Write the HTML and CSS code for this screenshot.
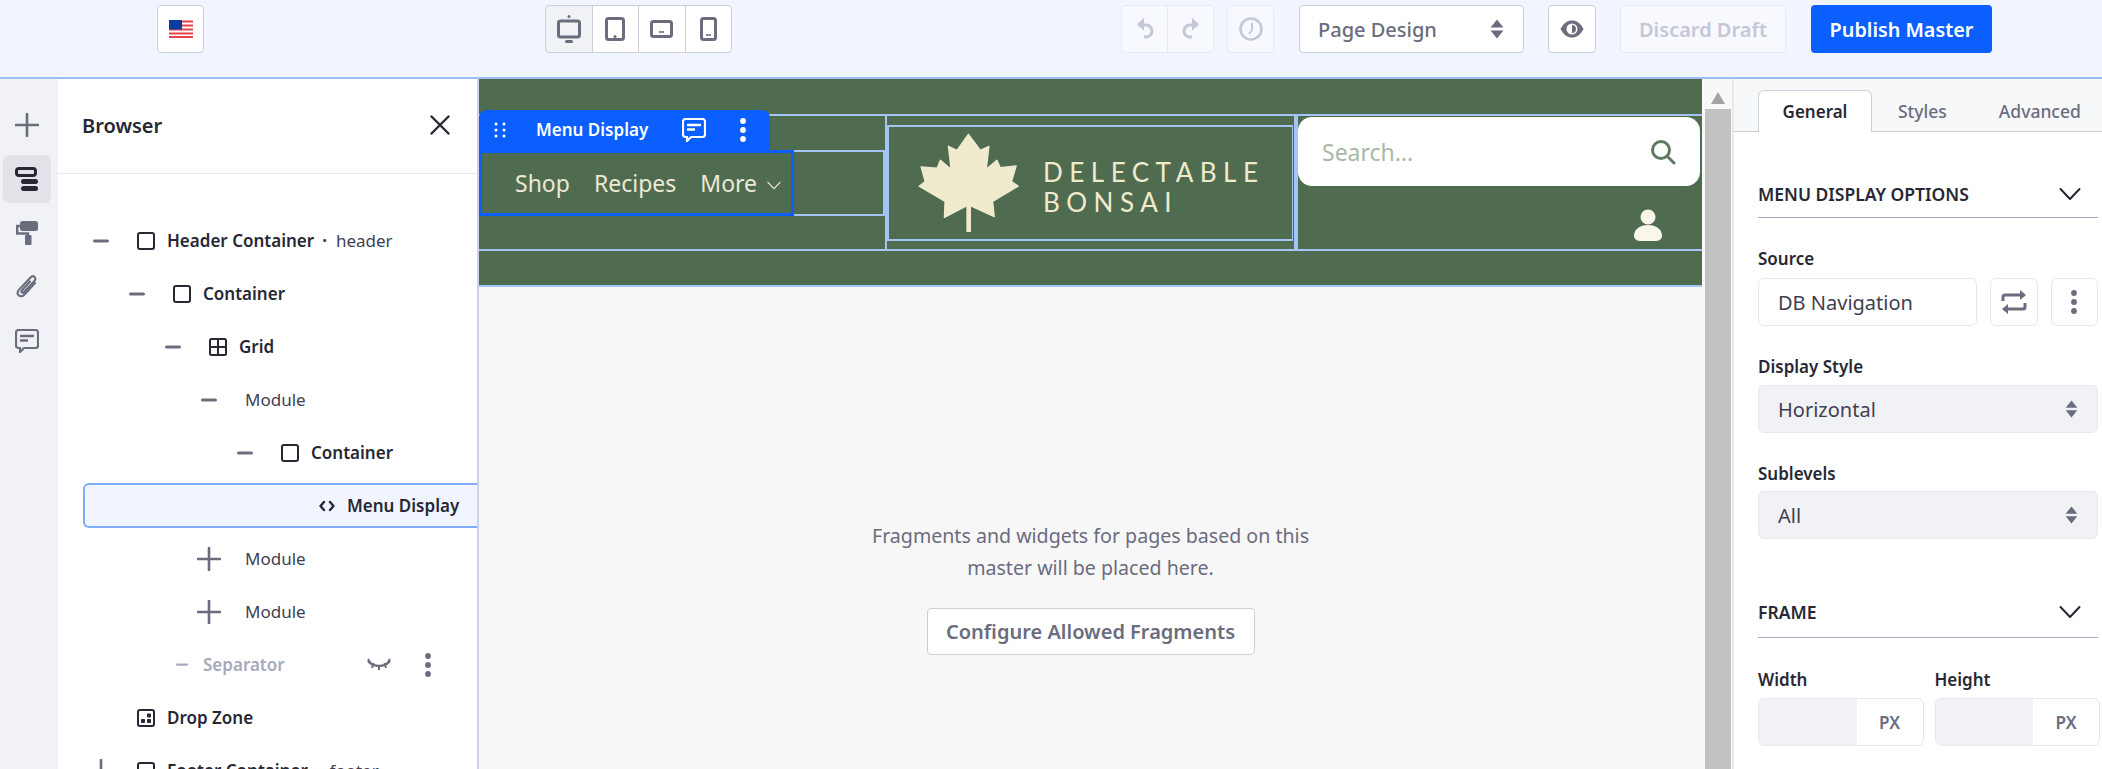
FILE: index.html
```html
<!DOCTYPE html>
<html lang="en">
<head>
  <meta charset="UTF-8" />
  <title>Page Design</title>
  <link rel="stylesheet" href="styles.css">
</head>
<body>

  <svg class="sprite" xmlns="http://www.w3.org/2000/svg">
    <symbol id="i-plus" viewBox="0 0 24 24"><path d="M12 1v22M1 12h22" fill="none" stroke="currentColor" stroke-width="2.6" stroke-linecap="round"/></symbol>
    <symbol id="i-minus" viewBox="0 0 16 4"><path d="M1.500 2h13" fill="none" stroke="currentColor" stroke-width="3" stroke-linecap="round"/></symbol>
    <symbol id="i-box" viewBox="0 0 18 18"><rect x="1" y="1" width="16" height="16" rx="2" fill="none" stroke="currentColor" stroke-width="2"/></symbol>
    <symbol id="i-grid" viewBox="0 0 18 18"><rect x="1" y="1" width="16" height="16" rx="1.5" fill="none" stroke="currentColor" stroke-width="2"/><path d="M9 1v16M1 9h16" stroke="currentColor" stroke-width="2"/></symbol>
    <symbol id="i-code" viewBox="0 0 16 12"><path d="M5 2 1.500 6 5 10M11 2l3.500 4L11 10" fill="none" stroke="currentColor" stroke-width="2.400" stroke-linecap="round" stroke-linejoin="round"/></symbol>
    <symbol id="i-zone" viewBox="0 0 18 18"><rect x="1" y="1" width="16" height="16" rx="2" fill="none" stroke="currentColor" stroke-width="2"/><rect x="4" y="10" width="4" height="4" rx=".8" fill="currentColor"/><rect x="10" y="10" width="4" height="4" rx=".8" fill="currentColor"/><rect x="10" y="4.500" width="4" height="4" rx=".8" fill="currentColor"/></symbol>
    <symbol id="i-dots" viewBox="0 0 6 24"><circle cx="3" cy="3" r="2.900" fill="currentColor"/><circle cx="3" cy="12" r="2.900" fill="currentColor"/><circle cx="3" cy="21" r="2.900" fill="currentColor"/></symbol>
    <symbol id="i-comment" viewBox="0 0 24 24"><path d="M3.500 1h17A2.500 2.500 0 0 1 23 3.500v13a2.500 2.500 0 0 1-2.500 2.500H9l-4 4v-4H3.500A2.500 2.500 0 0 1 1 16.500v-13A2.500 2.500 0 0 1 3.500 1Z" fill="none" stroke="currentColor" stroke-width="2.200"/><path d="M5 7h14M5 11.500h8" stroke="currentColor" stroke-width="2.400"/></symbol>
    <symbol id="i-updown" viewBox="0 0 14 20"><path d="M7 .5 13.500 8.500H.5ZM7 19.500.5 11.500h13Z" fill="currentColor"/></symbol>
    <symbol id="i-chevron" viewBox="0 0 22 14"><path d="M1.500 2 11 12l9.500-10" fill="none" stroke="currentColor" stroke-width="2" stroke-linecap="round" stroke-linejoin="round"/></symbol>
  </svg>

  <header class="topbar">
    <button class="tool tool-flag" aria-label="Language">
      <svg width="24" height="18" viewBox="0 0 24 18">
        <rect width="24" height="18" fill="#fff"/>
        <path d="M0 1.500h24M0 5.500h24M0 9.500h24M0 13.500h24M0 17h24" stroke="#e8434b" stroke-width="1.800"/>
        <rect width="13" height="9.500" fill="#0b3c9e"/>
      </svg>
    </button>

    <div class="group group-devices">
      <button class="tool tool-active" aria-label="Desktop">
        <svg width="24" height="28" viewBox="0 0 24 28" class="dev"><circle cx="12" cy="1.500" r="1.500" fill="currentColor"/><rect x="1.500" y="6" width="21" height="16" rx="2" fill="none" stroke="currentColor" stroke-width="3"/><rect x="8" y="25" width="8" height="3" rx="1.500" fill="currentColor"/></svg>
      </button>
      <button class="tool" aria-label="Tablet portrait">
        <svg width="20" height="24" viewBox="0 0 20 24" class="dev"><rect x="1.500" y="1.500" width="17" height="21" rx="2" fill="none" stroke="currentColor" stroke-width="3"/><circle cx="10" cy="19.500" r="1.500" fill="currentColor"/></svg>
      </button>
      <button class="tool" aria-label="Tablet landscape">
        <svg width="23" height="18" viewBox="0 0 23 18" class="dev"><rect x="1.500" y="1.500" width="20" height="15" rx="2" fill="none" stroke="currentColor" stroke-width="3"/><path d="M9 12h5" stroke="currentColor" stroke-width="1.600"/></svg>
      </button>
      <button class="tool" aria-label="Phone">
        <svg width="17" height="24" viewBox="0 0 17 24" class="dev"><rect x="1.500" y="1.500" width="14" height="21" rx="2" fill="none" stroke="currentColor" stroke-width="3"/><path d="M6 18h5" stroke="currentColor" stroke-width="1.600"/></svg>
      </button>
    </div>

    <div class="group group-undo">
      <button class="tool tool-off" aria-label="Undo">
        <svg width="18" height="24" viewBox="0 0 18 24"><path d="M2 7h8a6 6 0 0 1 0 12H8" fill="none" stroke="currentColor" stroke-width="3" transform="translate(0 1)"/><path d="M8 1v13L1 8Z" fill="currentColor" transform="translate(0 -.5)"/></svg>
      </button>
      <button class="tool tool-off" aria-label="Redo">
        <svg width="18" height="24" viewBox="0 0 18 24"><path d="M16 7H8a6 6 0 0 0 0 12h2" fill="none" stroke="currentColor" stroke-width="3" transform="translate(0 1)"/><path d="M10 1v13l7-6Z" fill="currentColor" transform="translate(0 -.5)"/></svg>
      </button>
    </div>

    <button class="tool tool-off tool-single tool-history" aria-label="History">
      <svg width="24" height="24" viewBox="0 0 24 24"><circle cx="12" cy="12" r="10.500" fill="none" stroke="currentColor" stroke-width="2.600"/><path d="M13 6v7l-3 4" fill="none" stroke="currentColor" stroke-width="2"/></svg>
    </button>

    <div class="mode-select">
      <span>Page Design</span>
      <svg width="14" height="20" class="updown-top"><use href="#i-updown"/></svg>
    </div>

    <button class="tool tool-single tool-eye" aria-label="Preview">
      <svg width="24" height="18" viewBox="0 0 24 18"><path d="M.5 9c3-6 7-8.500 11.500-8.500S20.500 3 23.500 9c-3 6-7 8.500-11.500 8.500S3.500 15 .5 9Z" fill="currentColor"/><circle cx="12" cy="9" r="5.500" fill="#fff"/><path d="M12 5a4 4 0 0 1 0 8Z" fill="currentColor"/></svg>
    </button>

    <button class="btn-discard">Discard Draft</button>
    <button class="btn-publish">Publish Master</button>
  </header>

  <main class="workspace">
    <nav class="rail">
      <span class="rail-item"><svg width="24" height="24"><use href="#i-plus"/></svg></span>
      <span class="rail-item rail-active">
        <svg width="24" height="24" viewBox="0 0 24 24"><rect x="1.500" y="1.500" width="19" height="7" rx="2.500" fill="none" stroke="#272833" stroke-width="3"/><rect x="6" y="12" width="17" height="5" rx="2.500" fill="#272833"/><rect x="6" y="19" width="17" height="5" rx="2.500" fill="#272833"/></svg>
      </span>
      <span class="rail-item">
        <svg width="22" height="24" viewBox="0 0 22 24"><rect x="4" y="0" width="18" height="10" rx="2.500" fill="currentColor"/><path d="M4 5H1.200v7.500H12V15" fill="none" stroke="currentColor" stroke-width="2.400"/><rect x="9" y="14" width="6.500" height="10" rx="1" fill="currentColor"/></svg>
      </span>
      <span class="rail-item">
        <svg width="24" height="24" viewBox="0 0 24 24"><path d="M20 8 9.500 19.500c-1.800 2-4.300 2.200-5.800.800s-1.300-3.800.4-5.700L15.500 2.500c1.300-1.400 3-1.500 4.100-.5s1 2.700-.2 4L9 17c-.7.800-1.600.900-2.200.400s-.5-1.400.2-2.200L15 6.500" fill="none" stroke="currentColor" stroke-width="2.100" stroke-linecap="round"/></svg>
      </span>
      <span class="rail-item"><svg width="24" height="24"><use href="#i-comment"/></svg></span>
    </nav>

    <aside class="browser">
      <div class="browser-head">
        <h2>Browser</h2>
        <svg width="20" height="20" viewBox="0 0 20 20"><path d="M1.500 1.500l17 17M18.500 1.500l-17 17" stroke="#272833" stroke-width="2.400" stroke-linecap="round"/></svg>
      </div>

      <ul class="tree">
        <li class="row d0 strong">
          <span class="toggle"><svg width="16" height="4"><use href="#i-minus"/></svg></span>
          <svg class="node" width="18" height="18"><use href="#i-box"/></svg>
          <span>Header Container</span><span class="tag"><b>·</b>header</span>
        </li>
        <li class="row d1 strong">
          <span class="toggle"><svg width="16" height="4"><use href="#i-minus"/></svg></span>
          <svg class="node" width="18" height="18"><use href="#i-box"/></svg>
          <span>Container</span>
        </li>
        <li class="row d2 strong">
          <span class="toggle"><svg width="16" height="4"><use href="#i-minus"/></svg></span>
          <svg class="node" width="18" height="18"><use href="#i-grid"/></svg>
          <span>Grid</span>
        </li>
        <li class="row d3 plain">
          <span class="toggle"><svg width="16" height="4"><use href="#i-minus"/></svg></span>
          <span>Module</span>
        </li>
        <li class="row d4 strong">
          <span class="toggle"><svg width="16" height="4"><use href="#i-minus"/></svg></span>
          <svg class="node" width="18" height="18"><use href="#i-box"/></svg>
          <span>Container</span>
        </li>
        <li class="row row-selected strong">
          <span class="toggle"></span>
          <svg class="node" width="16" height="12"><use href="#i-code"/></svg>
          <span>Menu Display</span>
        </li>
        <li class="row d3 plain">
          <span class="toggle"><svg width="24" height="24"><use href="#i-plus"/></svg></span>
          <span>Module</span>
        </li>
        <li class="row d3 plain">
          <span class="toggle"><svg width="24" height="24"><use href="#i-plus"/></svg></span>
          <span>Module</span>
        </li>
        <li class="row row-hidden strong">
          <span class="toggle"><svg width="12" height="3" viewBox="0 0 16 4" preserveAspectRatio="none"><use href="#i-minus"/></svg></span>
          <span>Separator</span>
          <svg class="eye-off" width="24" height="13" viewBox="0 0 24 13"><path d="M1 3c3 3.500 7 5 11 5s8-1.500 11-5" fill="none" stroke="currentColor" stroke-width="2.400"/><path d="M1 1l3 5M6.500 5 5 10M12 8v4M17.500 5 19 10M23 1l-3 5" stroke="currentColor" stroke-width="2" fill="none"/></svg>
          <svg class="row-dots" width="6" height="24"><use href="#i-dots"/></svg>
        </li>
        <li class="row d0 strong">
          <span class="toggle"></span>
          <svg class="node" width="18" height="18"><use href="#i-zone"/></svg>
          <span>Drop Zone</span>
        </li>
        <li class="row d0 strong">
          <span class="toggle"><svg width="24" height="24"><use href="#i-plus"/></svg></span>
          <svg class="node" width="18" height="18"><use href="#i-box"/></svg>
          <span>Footer Container</span><span class="tag"><b>·</b>footer</span>
        </li>
      </ul>
    </aside>

    <section class="canvas">
      <div class="site-header">
        <div class="site-grid">
          <div class="col col-menu">
            <div class="menu-wrap">
              <div class="menu-box">
                <div class="topper">
                  <svg width="12" height="16" viewBox="0 0 12 16" class="topper-grip"><g fill="#fff"><circle cx="2" cy="2" r="1.500"/><circle cx="10" cy="2" r="1.500"/><circle cx="2" cy="8" r="1.500"/><circle cx="10" cy="8" r="1.500"/><circle cx="2" cy="14" r="1.500"/><circle cx="10" cy="14" r="1.500"/></g></svg>
                  <span class="topper-title">Menu Display</span>
                  <svg width="24" height="24" class="topper-comment"><use href="#i-comment"/></svg>
                  <svg width="6" height="24" class="topper-dots"><use href="#i-dots"/></svg>
                </div>
                <span>Shop</span>
                <span>Recipes</span>
                <span>More</span>
                <svg class="menu-caret" width="14" height="9"><use href="#i-chevron"/></svg>
              </div>
            </div>
          </div>

          <div class="col col-logo">
            <div class="logo-box">
              <svg class="leaf" width="105" height="103" viewBox="165 60 315 310">
                <path fill="#f0ebcf" stroke="#f0ebcf" stroke-width="4" stroke-linejoin="round" d="M322 70 358 118 384 106 376 175 408 148 418 170 466 165 452 212 472 226 395 272 400 318 328 285 328 362 318 362 318 285 250 320 252 272 174 226 192 212 180 168 228 172 238 148 270 175 262 106 288 118Z"/>
              </svg>
              <div class="logo-text">DELECTABLE<br>BONSAI</div>
            </div>
          </div>

          <div class="col col-search">
            <div class="search-box">
              <span>Search...</span>
              <svg width="26" height="26" viewBox="0 0 26 26"><circle cx="11" cy="11" r="8.500" fill="none" stroke="#5f7a60" stroke-width="3"/><path d="M17 17l7 7" stroke="#5f7a60" stroke-width="3" stroke-linecap="round"/></svg>
            </div>
            <svg class="user" width="28" height="32" viewBox="0 0 28 32"><circle cx="14" cy="8" r="7.500" fill="#f9f7ec"/><path d="M0 27c0-7 6-11 14-11s14 4 14 11c0 3-3 5-7 5H7c-4 0-7-2-7-5Z" fill="#f9f7ec"/></svg>
          </div>
        </div>
      </div>

      <div class="drop-area">
        <p>Fragments and widgets for pages based on this<br>master will be placed here.</p>
        <button class="btn-configure">Configure Allowed Fragments</button>
      </div>
    </section>

    <div class="scrollbar">
      <svg width="14" height="12" viewBox="0 0 14 12"><path d="M7 0 14 12H0Z" fill="#a3a3a3"/></svg>
      <div class="scroll-thumb"></div>
    </div>

    <aside class="props">
      <div class="tabs">
        <span class="tab tab-active">General</span>
        <span class="tab tab-styles">Styles</span>
        <span class="tab tab-advanced">Advanced</span>
      </div>

      <div class="props-body">
        <div class="section-head section-first">
          <span>MENU DISPLAY OPTIONS</span>
          <svg width="22" height="14"><use href="#i-chevron"/></svg>
        </div>

        <label class="field-label label-first">Source</label>
        <div class="source-row">
          <div class="input input-source">DB Navigation</div>
          <span class="square-btn"><svg width="26" height="24" viewBox="0 0 26 24"><path d="M2 11V7a2 2 0 0 1 2-2h18M24 13v4a2 2 0 0 1-2 2H4" fill="none" stroke="currentColor" stroke-width="3"/><path d="M19 0l6 5-6 5ZM7 14l-6 5 6 5Z" fill="currentColor"/></svg></span>
          <span class="square-btn"><svg width="6" height="24"><use href="#i-dots"/></svg></span>
        </div>

        <label class="field-label">Display Style</label>
        <div class="input input-select">Horizontal<svg width="13" height="18"><use href="#i-updown"/></svg></div>

        <label class="field-label label-tight">Sublevels</label>
        <div class="input input-select">All<svg width="13" height="18"><use href="#i-updown"/></svg></div>

        <div class="section-head section-frame">
          <span>FRAME</span>
          <svg width="22" height="14"><use href="#i-chevron"/></svg>
        </div>

        <div class="size-row">
          <div class="size-field">
            <label class="field-label label-size">Width</label>
            <div class="size-input"><span class="size-value"></span><span class="size-unit">PX</span></div>
          </div>
          <div class="size-field">
            <label class="field-label label-size">Height</label>
            <div class="size-input"><span class="size-value"></span><span class="size-unit">PX</span></div>
          </div>
        </div>
      </div>
    </aside>
  </main>

</body>
</html>
```

FILE: styles.css
```css
* {
  box-sizing: border-box;
}

body {
  margin: 0;
  width: 2102px;
  height: 769px;
  overflow: hidden;
  font-family: "Noto Sans", "Liberation Sans", sans-serif;
  font-size: 16px;
  color: #272833;
  background-color: #fff;
}

button {
  font-family: inherit;
  padding: 0;
}

.sprite {
  position: absolute;
  width: 0;
  height: 0;
}

/* top bar */
.topbar {
  height: 79px;
  padding: 5px 0 0 157px;
  display: flex;
  align-items: flex-start;
  background-color: #f0f5ff;
  border-bottom: 2px solid #9dbdf0;
}

.tool {
  width: 47px;
  height: 48px;
  display: flex;
  align-items: center;
  justify-content: center;
  background-color: #fff;
  border: 1px solid #cdced9;
  border-radius: 4px;
  color: #6b6c7e;
}

.group {
  display: flex;
}

.group .tool {
  border-radius: 0;
  margin-left: -1px;
}

.group .tool:first-child {
  border-radius: 4px 0 0 4px;
  margin-left: 0;
}

.group .tool:last-child {
  border-radius: 0 4px 4px 0;
}

.group-devices {
  margin-left: 341px;
}

.group-devices .tool {
  width: 47.5px;
}

.tool-active {
  background-color: #f1f2f5;
}

.tool-off {
  background-color: #f7f9ff;
  border-color: #e7e9f2;
  color: #c5c7d6;
}

.group-undo {
  margin-left: 389px;
}

.tool-history {
  margin-left: 13px;
}

.mode-select {
  width: 225px;
  height: 48px;
  margin-left: 25px;
  padding: 0 19px 0 18px;
  display: flex;
  align-items: center;
  justify-content: space-between;
  background-color: #fff;
  border: 1px solid #cdced9;
  border-radius: 4px;
  font-size: 20px;
  font-weight: 500;
  color: #6b6c7e;
}

.updown-top {
  color: #6b6c7e;
}

.tool-eye {
  margin-left: 24px;
  width: 48px;
}

.btn-discard {
  width: 166px;
  height: 48px;
  margin-left: 24px;
  background-color: #f7f9ff;
  border: 1px solid #e7e9f2;
  border-radius: 4px;
  font-size: 20px;
  font-weight: 600;
  color: #c5c7d6;
}

.btn-publish {
  width: 181px;
  height: 48px;
  margin-left: 25px;
  background-color: #0b5fff;
  border: none;
  border-radius: 4px;
  font-size: 19.8px;
  font-weight: 600;
  color: #fff;
}

/* main area */
.workspace {
  height: 690px;
  display: flex;
}

.rail {
  width: 58px;
  padding: 22px 3px 0;
  display: flex;
  flex-direction: column;
  gap: 6px;
  background-color: #f1f2f5;
  color: #6b6c7e;
}

.rail-item {
  width: 48px;
  height: 48px;
  display: flex;
  align-items: center;
  justify-content: center;
  border-radius: 6px;
}

.rail-active {
  background-color: #e2e3e9;
}

/* browser panel */
.browser {
  width: 421px;
  flex-shrink: 0;
  overflow: hidden;
  border-right: 2px solid #ccd3e8;
}

.browser-head {
  height: 95px;
  padding: 0 27px 2px 24px;
  display: flex;
  align-items: center;
  justify-content: space-between;
  border-bottom: 1px solid #e7e7ed;
}

.browser-head h2 {
  margin: 0;
  font-size: 20px;
  font-weight: 600;
}

.tree {
  list-style: none;
  margin: 0;
  padding: 40px 0 0;
}

.row {
  height: 53px;
  display: flex;
  align-items: center;
  white-space: nowrap;
}

.strong {
  font-size: 17px;
  font-weight: 600;
}

.plain {
  font-size: 17px;
  color: #3f4150;
}

.d0 { padding-left: 21px; }
.d1 { padding-left: 57px; }
.d2 { padding-left: 93px; }
.d3 { padding-left: 129px; }
.d4 { padding-left: 165px; }

.toggle {
  width: 44px;
  margin-right: 14px;
  flex-shrink: 0;
  display: flex;
  align-items: center;
  justify-content: center;
  color: #6b6c7e;
}

.node {
  margin-right: 12px;
  flex-shrink: 0;
  color: #272833;
}

.tag {
  margin-left: 8px;
  font-weight: 400;
  color: #3f4150;
}

.tag b {
  margin-right: 9px;
}

.row-selected {
  height: 45px;
  margin: 4px 0 4px 25px;
  padding-left: 176px;
  background-color: #f0f5ff;
  border: 2px solid #80acff;
  border-right: none;
  border-radius: 6px 0 0 6px;
}

.row-hidden {
  padding-left: 108px;
  color: #a7a9bc;
}

.row-hidden .toggle {
  width: 32px;
  margin-right: 5px;
  color: #a7a9bc;
}

.eye-off {
  margin-left: 82px;
  color: #6b6c7e;
}

.row-dots {
  margin-left: 34px;
  color: #6b6c7e;
}

/* page canvas */
.canvas {
  width: 1223px;
  flex-shrink: 0;
  background-color: #f7f7f7;
}

.site-header {
  height: 208px;
  padding-top: 35px;
  background-color: #506c50;
  border-bottom: 2px solid #a4c4f4;
}

.site-grid {
  height: 137px;
  display: flex;
  border-top: 2px solid #a4c4f4;
  border-bottom: 2px solid #a4c4f4;
}

.col {
  flex: 0 0 408px;
  border-right: 2px solid #a4c4f4;
}

.col-menu {
  display: flex;
  align-items: center;
}

.menu-wrap {
  width: 100%;
  height: 66px;
  border: 2px solid #a4c4f4;
  border-left: none;
}

.menu-box {
  position: relative;
  width: 315px;
  height: 66px;
  margin-top: -2px;
  padding-left: 33px;
  display: flex;
  align-items: center;
  gap: 24px;
  border: 3px solid #0b5fff;
  font-size: 23px;
  color: #ece9d5;
}

.menu-caret {
  margin: 5px 0 0 -14px;
  color: #ece9d5;
}

.topper {
  position: absolute;
  left: -3px;
  bottom: calc(100% + 3px);
  width: 291px;
  height: 40px;
  display: flex;
  align-items: center;
  background-color: #0b5fff;
  border-radius: 8px 8px 0 0;
  color: #fff;
  font-size: 17px;
  font-weight: 600;
}

.topper-grip {
  margin-left: 15px;
}

.topper-title {
  margin-left: 30px;
}

.topper-comment {
  margin-left: 34px;
}

.topper-dots {
  margin-left: 34px;
}

.col-logo {
  flex-basis: 409px;
  padding-top: 9px;
}

.logo-box {
  height: 116px;
  margin-right: 1px;
  padding: 0 0 2px 27px;
  display: flex;
  align-items: center;
  gap: 22px;
  border: 2px solid #a4c4f4;
  border-right-width: 1px;
}

.logo-text {
  margin-top: 10px;
  font-family: "Lato", sans-serif;
  font-size: 26px;
  line-height: 30px;
  letter-spacing: 6.5px;
  color: #f0ebcf;
}

.col-search {
  flex: 1;
  padding: 1px 2px 0 0;
  display: flex;
  flex-direction: column;
  border-right: none;
  border-left: 2px solid #a4c4f4;
}

.search-box {
  height: 69px;
  padding: 0 24px;
  display: flex;
  align-items: center;
  justify-content: space-between;
  background-color: #fff;
  border-radius: 14px;
  font-size: 23px;
  color: #a9b8a8;
}

.user {
  margin: 23px 0 0 336px;
}

.drop-area {
  padding-top: 233px;
  text-align: center;
}

.drop-area p {
  margin: 0 0 24px;
  font-size: 19.6px;
  line-height: 32px;
  color: #6b6c7e;
}

.btn-configure {
  width: 328px;
  height: 47px;
  background-color: #fff;
  border: 1px solid #cdced9;
  border-radius: 4px;
  font-size: 20px;
  font-weight: 600;
  color: #6b6c7e;
}

/* scrollbar */
.scrollbar {
  width: 32px;
  flex-shrink: 0;
  padding: 13px 0 0 2px;
  display: flex;
  flex-direction: column;
  align-items: center;
  background-color: #f8f8f8;
  border-right: 2px solid #e7e7ed;
}

.scroll-thumb {
  width: 26px;
  height: 660px;
  margin-top: 5px;
  background-color: #c1c1c1;
}

/* right panel */
.props {
  flex: 1;
  overflow: hidden;
}

.tabs {
  height: 53px;
  padding: 11px 0 0 24px;
  display: flex;
  background-color: #f7f8f9;
  border-bottom: 1px solid #cdced9;
}

.tab {
  height: 42px;
  display: flex;
  align-items: center;
  font-size: 17.5px;
  font-weight: 500;
  color: #6b6c7e;
}

.tab-active {
  width: 114px;
  justify-content: center;
  font-size: 17px;
  background-color: #fff;
  border: 1px solid #cdced9;
  border-bottom: none;
  border-radius: 6px 6px 0 0;
  font-weight: 600;
  color: #272833;
}

.tab-styles {
  margin-left: 26px;
}

.tab-advanced {
  margin-left: 52px;
}

.props-body {
  padding: 0 4px 0 24px;
}

.section-head {
  display: flex;
  align-items: center;
  justify-content: space-between;
  padding-right: 17px;
  border-bottom: 1px solid #a7a9bc;
  font-size: 17.5px;
  font-weight: 600;
}

.section-first {
  height: 47px;
  margin-top: 39px;
}

.section-frame {
  height: 50px;
  margin-top: 49px;
  padding-bottom: 2px;
}

.field-label {
  display: block;
  height: 22px;
  margin: 30px 0 7px;
  line-height: 22px;
  font-size: 17px;
  font-weight: 600;
}

.label-first {
  margin-top: 30px;
  margin-bottom: 8px;
}

.label-tight {
  margin-bottom: 6px;
}

.label-size {
  margin-top: 31px;
  margin-bottom: 7px;
}

.source-row {
  display: flex;
  gap: 13px;
}

.input {
  height: 48px;
  padding: 0 19px;
  display: flex;
  align-items: center;
  border: 1px solid #e7e7ed;
  border-radius: 6px;
  font-size: 20px;
  color: #3f4150;
}

.input-source {
  width: 221px;
  background-color: #fff;
}

.square-btn {
  width: 48px;
  height: 48px;
  display: flex;
  align-items: center;
  justify-content: center;
  border: 1px solid #e7e7ed;
  border-radius: 6px;
  color: #6b6c7e;
}

.input-select {
  justify-content: space-between;
  background-color: #f1f2f5;
}

.input-select svg {
  color: #6b6c7e;
}

.size-row {
  display: flex;
  gap: 11px;
  width: 342px;
}

.size-field {
  flex: 1;
}

.size-input {
  height: 48px;
  display: flex;
  border: 1px solid #e7e7ed;
  border-radius: 6px;
  overflow: hidden;
}

.size-value {
  flex: 1;
  background-color: #f1f2f5;
}

.size-unit {
  width: 66px;
  display: flex;
  align-items: center;
  justify-content: center;
  font-size: 17px;
  font-weight: 600;
  color: #6b6c7e;
}
```
